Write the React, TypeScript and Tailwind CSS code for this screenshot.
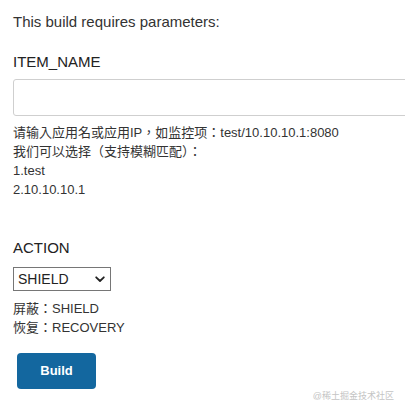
import React from "react";

export default function App() {
  const font = { fontFamily: '"Liberation Sans", "Noto Sans CJK TC", sans-serif' };
  return (
    <div className="relative w-[405px] h-[413px] overflow-hidden bg-white text-[#333]" style={font}>
      <div className="pl-[13px] pt-[12px]">
        <div className="text-[15px] leading-[20px]">This build requires parameters:</div>
        <div className="mt-[20px] text-[15px] leading-[20px] text-[#222]">ITEM_NAME</div>
        <div className="mt-[7px] w-[420px] h-[37px] rounded-[3px] border border-[#cfcfcf] bg-white" />
        <div className="mt-[7px] text-[13px] leading-[19px] text-[#333]">
          <div>请输入应用名或应用IP，如监控项：test/10.10.10.1:8080</div>
          <div>我们可以选择（支持模糊匹配）：</div>
          <div>1.test</div>
          <div>2.10.10.10.1</div>
        </div>
        <div className="mt-[39px] text-[15px] leading-[20px] text-[#222]">ACTION</div>
        <div className="mt-[9px] flex h-[24px] w-[98px] items-center justify-between border border-[#767676] bg-white pl-[4px] pr-[5px]">
          <span className="text-[14px] leading-none text-[#222]">SHIELD</span>
          <svg width="10" height="7" viewBox="0 0 10 7" className="mt-[1px]">
            <path d="M1.2 1.3 L5 5 L8.8 1.3" fill="none" stroke="#222" strokeWidth="1.8" strokeLinecap="round" strokeLinejoin="round" />
          </svg>
        </div>
        <div className="mt-[8px] text-[13px] leading-[19px] text-[#333]">
          <div>屏蔽：SHIELD</div>
          <div>恢复：RECOVERY</div>
        </div>
        <button className="mt-[16px] ml-[4px] flex h-[36px] w-[79px] items-center justify-center rounded-[4px] bg-[#13679f] text-[13px] font-bold text-white">
          Build
        </button>
      </div>
      <div className="absolute right-[11px] top-[390px] text-[9px] leading-[12px] text-[#c4c4c4]">@稀土掘金技术社区</div>
    </div>
  );
}
